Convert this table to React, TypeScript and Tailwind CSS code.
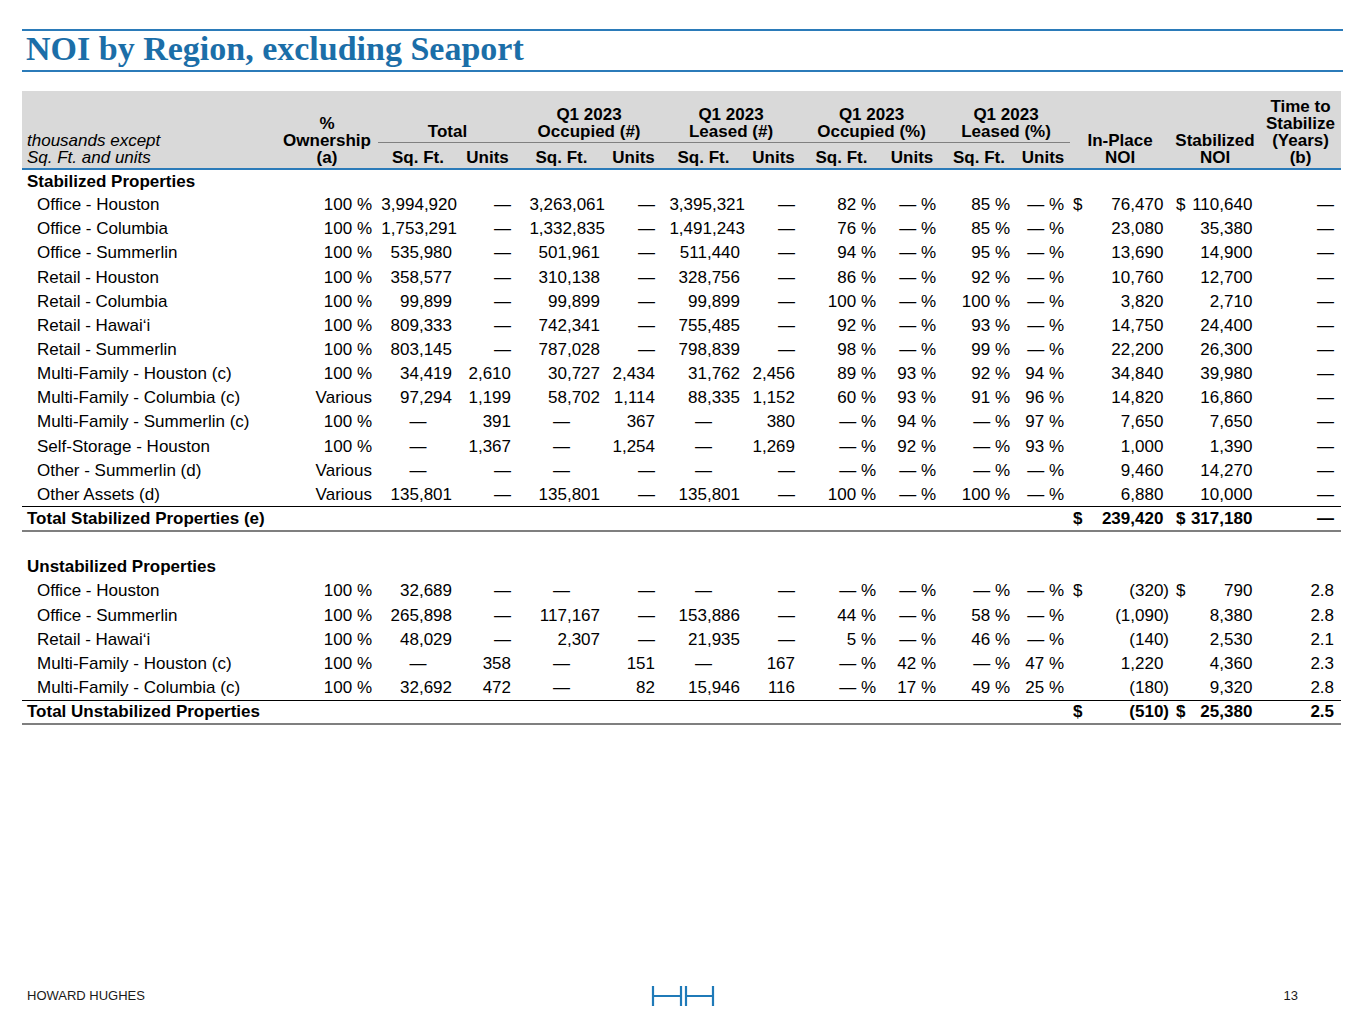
import { ReactNode } from 'react';

// 14 values after the label: own, total sf, total units, occ sf, occ units, leased sf, leased units,
// occ% sf, occ% units, leased% sf, leased% units, in-place NOI, stabilized NOI, years
type Row = { label: string; v: string[]; dollar?: boolean };

const stabilized: Row[] = [
  { label: 'Office - Houston', dollar: true, v: ['100 %', '3,994,920', '—', '3,263,061', '—', '3,395,321', '—', '82 %', '— %', '85 %', '— %', '76,470', '110,640', '—'] },
  { label: 'Office - Columbia', v: ['100 %', '1,753,291', '—', '1,332,835', '—', '1,491,243', '—', '76 %', '— %', '85 %', '— %', '23,080', '35,380', '—'] },
  { label: 'Office - Summerlin', v: ['100 %', '535,980', '—', '501,961', '—', '511,440', '—', '94 %', '— %', '95 %', '— %', '13,690', '14,900', '—'] },
  { label: 'Retail - Houston', v: ['100 %', '358,577', '—', '310,138', '—', '328,756', '—', '86 %', '— %', '92 %', '— %', '10,760', '12,700', '—'] },
  { label: 'Retail - Columbia', v: ['100 %', '99,899', '—', '99,899', '—', '99,899', '—', '100 %', '— %', '100 %', '— %', '3,820', '2,710', '—'] },
  { label: 'Retail - Hawaiʻi', v: ['100 %', '809,333', '—', '742,341', '—', '755,485', '—', '92 %', '— %', '93 %', '— %', '14,750', '24,400', '—'] },
  { label: 'Retail - Summerlin', v: ['100 %', '803,145', '—', '787,028', '—', '798,839', '—', '98 %', '— %', '99 %', '— %', '22,200', '26,300', '—'] },
  { label: 'Multi-Family - Houston (c)', v: ['100 %', '34,419', '2,610', '30,727', '2,434', '31,762', '2,456', '89 %', '93 %', '92 %', '94 %', '34,840', '39,980', '—'] },
  { label: 'Multi-Family - Columbia (c)', v: ['Various', '97,294', '1,199', '58,702', '1,114', '88,335', '1,152', '60 %', '93 %', '91 %', '96 %', '14,820', '16,860', '—'] },
  { label: 'Multi-Family - Summerlin (c)', v: ['100 %', '—', '391', '—', '367', '—', '380', '— %', '94 %', '— %', '97 %', '7,650', '7,650', '—'] },
  { label: 'Self-Storage - Houston', v: ['100 %', '—', '1,367', '—', '1,254', '—', '1,269', '— %', '92 %', '— %', '93 %', '1,000', '1,390', '—'] },
  { label: 'Other - Summerlin (d)', v: ['Various', '—', '—', '—', '—', '—', '—', '— %', '— %', '— %', '— %', '9,460', '14,270', '—'] },
  { label: 'Other Assets (d)', v: ['Various', '135,801', '—', '135,801', '—', '135,801', '—', '100 %', '— %', '100 %', '— %', '6,880', '10,000', '—'] },
];

const unstabilized: Row[] = [
  { label: 'Office - Houston', dollar: true, v: ['100 %', '32,689', '—', '—', '—', '—', '—', '— %', '— %', '— %', '— %', '(320)', '790', '2.8'] },
  { label: 'Office - Summerlin', v: ['100 %', '265,898', '—', '117,167', '—', '153,886', '—', '44 %', '— %', '58 %', '— %', '(1,090)', '8,380', '2.8'] },
  { label: 'Retail - Hawaiʻi', v: ['100 %', '48,029', '—', '2,307', '—', '21,935', '—', '5 %', '— %', '46 %', '— %', '(140)', '2,530', '2.1'] },
  { label: 'Multi-Family - Houston (c)', v: ['100 %', '—', '358', '—', '151', '—', '167', '— %', '42 %', '— %', '47 %', '1,220', '4,360', '2.3'] },
  { label: 'Multi-Family - Columbia (c)', v: ['100 %', '32,692', '472', '—', '82', '15,946', '116', '— %', '17 %', '49 %', '25 %', '(180)', '9,320', '2.8'] },
];

const groups = [
  ['Total'],
  ['Q1 2023', 'Occupied (#)'],
  ['Q1 2023', 'Leased (#)'],
  ['Q1 2023', 'Occupied (%)'],
  ['Q1 2023', 'Leased (%)'],
];

const lines = (items: string[]) =>
  items.map((t, i) => (
    <span key={i} className="block">
      {t}
    </span>
  ));

const Cell = ({ value, idx }: { value: string; idx: number }) => {
  // sq. ft. columns centre their zero dash
  const isSqft = idx === 1 || idx === 3 || idx === 5;
  const long = value.length >= 9;
  return (
    <td className={isSqft && value === '—' ? 'text-center' : 'text-right pr-[6px]'}>
      {long ? <span className="inline-block mr-[-5px]">{value}</span> : value}
    </td>
  );
};

const Money = ({ value, dollar, bold, first }: { value: string; dollar?: boolean; bold?: boolean; first?: boolean }) => {
  const neg = value.startsWith('(');
  return (
    <td className={first ? 'pl-[3px] pr-[1px]' : 'pl-[6px] pr-[2px]'}>
      <div className={bold ? 'flex justify-between font-bold' : 'flex justify-between'}>
        <span>{dollar ? '$' : ''}</span>
        <span>
          {value}
          {!neg && <span className="invisible">)</span>}
        </span>
      </div>
    </td>
  );
};

const DataRow = ({ row }: { row: Row }) => (
  <tr className="h-[24.15px]">
    <td className="pl-[15px] whitespace-nowrap">{row.label}</td>
    {row.v.slice(0, 11).map((val, i) => (
      <Cell key={i} value={val} idx={i} />
    ))}
    <Money value={row.v[11]} dollar={row.dollar} first />
    <Money value={row.v[12]} dollar={row.dollar} />
    <td className="text-right pr-[7px]">{row.v[13]}</td>
  </tr>
);

const SectionRow = ({ children }: { children: ReactNode }) => (
  <tr className="h-[24.15px]">
    <td colSpan={15} className="pl-[5px] font-bold">
      {children}
    </td>
  </tr>
);

const TotalRow = ({ label, noi, stab, years }: { label: string; noi: string; stab: string; years: string }) => (
  <tr className="h-[24.15px] border-t border-black border-b-2 border-b-[#7f7f7f] font-bold">
    <td colSpan={12} className="pl-[5px]">
      {label}
    </td>
    <Money value={noi} dollar bold first />
    <Money value={stab} dollar bold />
    <td className="text-right pr-[7px]">{years}</td>
  </tr>
);

const HhLogo = () => (
  <svg width="64" height="22" viewBox="0 0 64 22" fill="none" stroke="#1f7ab8">
    <path d="M2 1v20M30 1v20M2 11h28" strokeWidth="2.2" />
    <path d="M35 1v20M62 1v20M35 11h27" strokeWidth="2.2" />
  </svg>
);

export default function App() {
  return (
    <div className="w-[1365px] h-[1024px] bg-white flex flex-col text-black font-['Liberation_Sans',Arial,sans-serif]">
      {/* Title bar */}
      <div className="mx-[22px] mt-[29px] border-y-2 border-[#2b7bb9]">
        <h1 className="pl-[4px] pb-[4px] leading-[35px] text-[34px] font-bold text-[#1b6ea8] font-['Liberation_Serif','Times_New_Roman',serif]">
          NOI by Region, excluding Seaport
        </h1>
      </div>

      <table className="mx-[22px] mt-[19px] w-[1319px] table-fixed border-collapse text-[17px]">
        <colgroup>
          <col className="w-[254px]" />
          <col className="w-[102px]" />
          <col className="w-[80px]" />
          <col className="w-[59px]" />
          <col className="w-[89px]" />
          <col className="w-[55px]" />
          <col className="w-[85px]" />
          <col className="w-[55px]" />
          <col className="w-[81px]" />
          <col className="w-[60px]" />
          <col className="w-[74px]" />
          <col className="w-[54px]" />
          <col className="w-[100px]" />
          <col className="w-[90px]" />
          <col className="w-[81px]" />
        </colgroup>
        <thead className="leading-[17px]">
          <tr className="h-[51px] bg-[#d9d9d9]">
            <th rowSpan={2} className="align-bottom text-left pl-[5px] pb-[2px] font-normal italic border-b-2 border-[#2b7bb9]">
              {lines(['thousands except', 'Sq. Ft. and units'])}
            </th>
            <th rowSpan={2} className="align-bottom pb-[2px] border-b-2 border-[#2b7bb9]">
              {lines(['%', 'Ownership', '(a)'])}
            </th>
            {groups.map((g, i) => (
              <th key={i} colSpan={2} className="align-bottom pb-[2px] border-b border-[#808080]">
                {lines(g)}
              </th>
            ))}
            <th rowSpan={2} className="align-bottom pb-[2px] border-b-2 border-[#2b7bb9]">
              {lines(['In-Place', 'NOI'])}
            </th>
            <th rowSpan={2} className="align-bottom pb-[2px] border-b-2 border-[#2b7bb9]">
              {lines(['Stabilized', 'NOI'])}
            </th>
            <th rowSpan={2} className="align-bottom pb-[2px] border-b-2 border-[#2b7bb9]">
              {lines(['Time to', 'Stabilize', '(Years)', '(b)'])}
            </th>
          </tr>
          <tr className="h-[27px] bg-[#d9d9d9]">
            {groups.flatMap((_, i) => [
              <th key={`s${i}`} className="align-bottom pb-[2px] border-b-2 border-[#2b7bb9]">
                Sq. Ft.
              </th>,
              <th key={`u${i}`} className="align-bottom pb-[2px] border-b-2 border-[#2b7bb9]">
                Units
              </th>,
            ])}
          </tr>
        </thead>
        <tbody className="leading-[20px]">
          <SectionRow>Stabilized Properties</SectionRow>
          {stabilized.map((r) => (
            <DataRow key={r.label} row={r} />
          ))}
          <TotalRow label="Total Stabilized Properties (e)" noi="239,420" stab="317,180" years="—" />
          <tr className="h-[24.15px]">
            <td colSpan={15} />
          </tr>
          <SectionRow>Unstabilized Properties</SectionRow>
          {unstabilized.map((r) => (
            <DataRow key={r.label} row={r} />
          ))}
          <TotalRow label="Total Unstabilized Properties" noi="(510)" stab="25,380" years="2.5" />
        </tbody>
      </table>

      {/* Footer */}
      <div className="mt-auto mb-[17px] h-[22px] grid grid-cols-3 items-center text-[13px] text-[#1a1a1a]">
        <span className="pl-[27px]">HOWARD HUGHES</span>
        <div className="flex justify-center">
          <HhLogo />
        </div>
        <span className="text-right pr-[67px]">13</span>
      </div>
    </div>
  );
}
